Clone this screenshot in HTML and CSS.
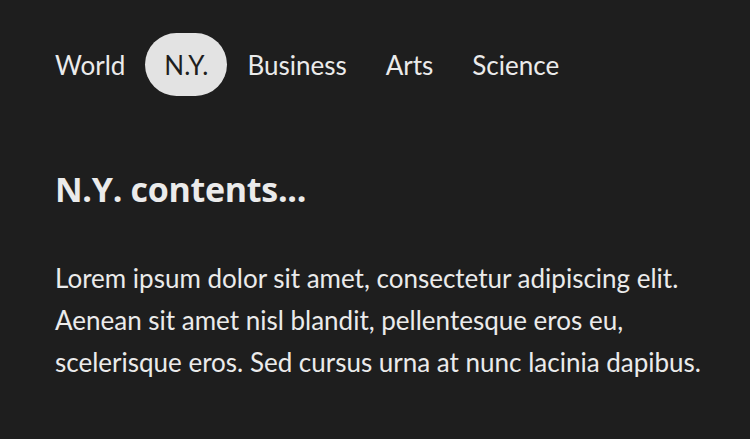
FILE: index.html
```html
<!DOCTYPE html>
<html lang="en">
<head>
<meta charset="utf-8">
<title>Tabs</title>
<link rel="stylesheet" href="styles.css">
</head>
<body>
<main class="page">
  <nav class="tabs" role="tablist">
    <span class="tab" role="tab">World</span>
    <span class="tab tab-selected" role="tab" aria-selected="true">N.Y.</span>
    <span class="tab" role="tab">Business</span>
    <span class="tab" role="tab">Arts</span>
    <span class="tab" role="tab">Science</span>
  </nav>
  <section class="panel" role="tabpanel">
    <h1 class="panel-title">N.Y. contents...</h1>
    <p class="panel-text">Lorem ipsum dolor sit amet, consectetur adipiscing elit.<br>Aenean sit amet nisl blandit, pellentesque eros eu,<br>scelerisque eros. Sed cursus urna at nunc lacinia dapibus.</p>
  </section>
</main>
</body>
</html>
```

FILE: styles.css
```css
html, body {
  margin: 0;
  padding: 0;
  background: #1e1e1e;
  height: 100%;
}
body {
  font-family: Lato, "Open Sans", sans-serif;
  color: #ebebeb;
}
.page {
  padding: 33px 16px 0 55px;
}
.tabs {
  display: flex;
  align-items: center;
  gap: 1px;
  margin-left: -19px;
}
.tab {
  display: flex;
  align-items: center;
  height: 63px;
  padding: 0 19px;
  border-radius: 32px;
  font-size: 26px;
  color: #ebebeb;
}
.tab-selected {
  background: #e3e3e3;
  color: #1e1e1e;
}
.panel-title {
  margin: 73px 0 0;
  font-family: "Open Sans", Lato, sans-serif;
  font-size: 34px;
  line-height: 1.2;
  font-weight: 700;
  letter-spacing: -0.3px;
  color: #ebebeb;
}
.panel-text {
  margin: 47px 0 0;
  font-size: 26px;
  line-height: 42px;
  white-space: nowrap;
  color: #ebebeb;
}
```
